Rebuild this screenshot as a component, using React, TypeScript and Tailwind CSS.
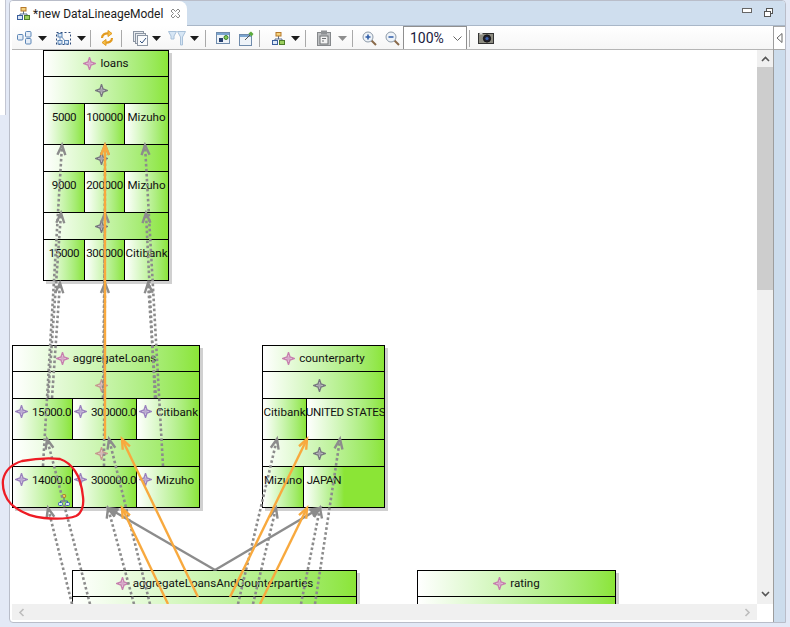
import React from 'react';

type Arrow = { x1: number; y1: number; x2: number; y2: number; kind: 'dot' | 'line' | 'orange' };

const GREEN = 'bg-linear-to-r from-white to-[#8be536]';

// everything in page coordinates, the head sits at x2,y2
const arrows: Arrow[] = [
  { x1: 43, y1: 466, x2: 62, y2: 145, kind: 'dot' },
  { x1: 48, y1: 398, x2: 61, y2: 213, kind: 'dot' },
  { x1: 52, y1: 398, x2: 60, y2: 283, kind: 'dot' },
  { x1: 104, y1: 466, x2: 105, y2: 145, kind: 'dot' },
  { x1: 103, y1: 398, x2: 105, y2: 213, kind: 'dot' },
  { x1: 104, y1: 398, x2: 105, y2: 283, kind: 'dot' },
  { x1: 163, y1: 466, x2: 145, y2: 145, kind: 'dot' },
  { x1: 155, y1: 398, x2: 146, y2: 213, kind: 'dot' },
  { x1: 156, y1: 398, x2: 148, y2: 283, kind: 'dot' },
  { x1: 90, y1: 604, x2: 47, y2: 439, kind: 'dot' },
  { x1: 72, y1: 604, x2: 48, y2: 508, kind: 'dot' },
  { x1: 134, y1: 604, x2: 108, y2: 508, kind: 'dot' },
  { x1: 150, y1: 604, x2: 109, y2: 439, kind: 'dot' },
  { x1: 238, y1: 604, x2: 277, y2: 439, kind: 'dot' },
  { x1: 253, y1: 604, x2: 276, y2: 508, kind: 'dot' },
  { x1: 301, y1: 604, x2: 320, y2: 508, kind: 'dot' },
  { x1: 315, y1: 604, x2: 340, y2: 439, kind: 'dot' },
  { x1: 215, y1: 570, x2: 108, y2: 508, kind: 'line' },
  { x1: 215, y1: 570, x2: 320, y2: 508, kind: 'line' },
  { x1: 105, y1: 439, x2: 105, y2: 145, kind: 'orange' },
  { x1: 198, y1: 597, x2: 122, y2: 439, kind: 'orange' },
  { x1: 168, y1: 604, x2: 122, y2: 508, kind: 'orange' },
  { x1: 230, y1: 597, x2: 307, y2: 439, kind: 'orange' },
  { x1: 260, y1: 604, x2: 307, y2: 508, kind: 'orange' },
];

function ArrowLine({ a }: { a: Arrow }) {
  const color = a.kind === 'orange' ? '#f8a93e' : '#8c8c8c';
  const dx = a.x2 - a.x1;
  const dy = a.y2 - a.y1;
  const len = Math.hypot(dx, dy);
  const ux = dx / len;
  const uy = dy / len;
  const back = 10;
  const side = 4;
  const lx = a.x2 - ux * back - uy * side;
  const ly = a.y2 - uy * back + ux * side;
  const rx = a.x2 - ux * back + uy * side;
  const ry = a.y2 - uy * back - ux * side;
  return (
    <g fill="none" stroke={color}>
      <line
        x1={a.x1}
        y1={a.y1}
        x2={a.x2}
        y2={a.y2}
        strokeWidth={a.kind === 'dot' ? 2.6 : 2.4}
        strokeDasharray={a.kind === 'dot' ? '2.6 2.4' : undefined}
      />
      <path
        d={`M${lx} ${ly}L${a.x2} ${a.y2}L${rx} ${ry}`}
        strokeWidth={2.4}
        fill={a.kind === 'line' ? color : 'none'}
      />
    </g>
  );
}

function Star({ color, size = 13 }: { color: string; size?: number }) {
  return (
    <svg width={size} height={size} viewBox="0 0 13 13" className="shrink-0">
      <path d="M6.5 .5L8 5L12.5 6.5L8 8L6.5 12.5L5 8L.5 6.5L5 5Z" fill="#eeeaf0" stroke={color} strokeWidth="1.4" />
      <path d="M6.5 4L9 6.5L6.5 9L4 6.5Z" fill={color} fillOpacity=".6" />
    </svg>
  );
}

function Cell({ text, star, tight, className }: { text: string; star?: boolean; tight?: boolean; className: string }) {
  // digits and capitals run narrower in the original font
  const tracking = /^[\d.]+$/.test(text) ? 'tracking-[-0.45px]' : /^[A-Z ]+$/.test(text) ? 'tracking-[-0.3px]' : '';
  const pad = tight ? 'pl-[1px]' : 'pl-[2px]';
  return (
    <div className={`${GREEN} ${className} flex ${star ? `justify-start ${pad} gap-[4px]` : 'justify-center'} pt-[5px] overflow-hidden whitespace-nowrap`}>
      {star && (
        <span className="pt-[1px]">
          <Star color="#9a82bd" />
        </span>
      )}
      <span className={tracking}>{text}</span>
    </div>
  );
}

function Row({ color }: { color: string }) {
  return (
    <div className={`${GREEN} h-[27px] border-b border-black flex items-center justify-center pr-[9px]`}>
      <Star color={color} />
    </div>
  );
}

function Header({ title }: { title: string }) {
  return (
    <div className={`${GREEN} h-[26px] border-b border-black flex items-center justify-center gap-[4px]`}>
      <Star color="#c77fae" />
      <span>{title}</span>
    </div>
  );
}

function LoansCells({ a, b, c }: { a: string; b: string; c: string }) {
  return (
    <div className="h-[41px] flex border-b border-black">
      <Cell text={a} className="w-[41px] border-r border-black" />
      <Cell text={b} className="w-[40px] border-r border-black" />
      <Cell text={c} className="flex-1" />
    </div>
  );
}

function AggCells({ a, b, c, children }: { a: string; b: string; c: string; children?: React.ReactNode }) {
  return (
    <div className="h-[41px] flex border-b border-black relative">
      <Cell star text={a} className="w-[60px] border-r border-black" />
      <Cell star tight text={b} className="w-[64px] border-r border-black" />
      <Cell star text={c} className="flex-1" />
      {children}
    </div>
  );
}

function Arrowdown({ className, color = '#1c1c1c' }: { className: string; color?: string }) {
  return (
    <div className={`${className} w-[9px] shrink-0`}>
      <svg width="9" height="5" viewBox="0 0 9 5" className="block">
        <path d="M0 0H9L4.5 5Z" fill={color} />
      </svg>
    </div>
  );
}

function Sep({ className }: { className: string }) {
  return <div className={`${className} w-px h-[17px] bg-[#a9a9a9] shrink-0`} />;
}

function Hierarchy() {
  return (
    <svg width="13" height="13" viewBox="0 0 13 13" className="shrink-0">
      <path d="M6.5 4V7M3 9V7H10V9" fill="none" stroke="#5a6f8f" />
      <rect x="4" y=".5" width="5" height="3.5" fill="#f6d27c" stroke="#b5792b" />
      <rect x=".5" y="8.5" width="5" height="4" fill="#dbe7f6" stroke="#3a5f9d" />
      <rect x="7.5" y="8.5" width="5" height="4" fill="#9bcf5e" stroke="#4d7d2a" />
    </svg>
  );
}

function Magnifier({ plus, className }: { plus?: boolean; className: string }) {
  return (
    <svg width="15" height="15" viewBox="0 0 15 15" className={`${className} shrink-0`}>
      <path d="M9.5 9.5L14 14" stroke="#8a6a4a" strokeWidth="2" />
      <circle cx="6" cy="6" r="5" fill="#eef3f8" stroke="#8d9aa8" />
      <path d="M3.5 6H8.5" stroke="#2f5da8" strokeWidth="1.6" />
      {plus && <path d="M6 3.5V8.5" stroke="#2f5da8" strokeWidth="1.6" />}
    </svg>
  );
}

function Toolbar() {
  return (
    <div className="h-[24px] flex items-center border-b border-[#b5b5b5] bg-linear-to-b from-white to-[#f6f6f6] ml-[2px] pt-[1px]">
      <svg width="15" height="14" viewBox="0 0 15 14" fill="#e6eef8" stroke="#5c86b6" className="ml-[5px] shrink-0">
        <rect x=".5" y="3.5" width="5.5" height="5.5" rx="1" />
        <rect x="8.5" y=".5" width="5.5" height="5.5" rx="1" />
        <rect x="8.5" y="7.5" width="5.5" height="5.5" rx="1" />
      </svg>
      <Arrowdown className="ml-[6px]" />
      <svg width="17" height="15" viewBox="0 0 17 15" fill="none" className="ml-[8px] shrink-0">
        <rect x="1.5" y="1.5" width="14" height="12" stroke="#2e4a78" strokeDasharray="2 2" />
        <path d="M5 4L11 11M5 4L5 10" stroke="#6d8fb8" />
        <rect x="3" y="2.5" width="4" height="3.5" fill="#dbe7f6" stroke="#5c86b6" />
        <rect x="3" y="9.5" width="4" height="3.5" fill="#dbe7f6" stroke="#5c86b6" />
        <rect x="9.5" y="9.5" width="4" height="3.5" fill="#dbe7f6" stroke="#5c86b6" />
      </svg>
      <Arrowdown className="ml-[5px]" />
      <Sep className="ml-[4px]" />
      <svg width="16" height="16" viewBox="0 0 16 16" fill="none" stroke="#e29a1f" strokeWidth="2.2" className="ml-[8px] shrink-0">
        <path d="M3 8C3 4.5 6 3 10 3.5" />
        <path d="M13 8C13 11.5 10 13 6 12.5" />
        <path d="M9 .5L13 3.5L9 6.5Z" fill="#f5c04a" strokeWidth="1" />
        <path d="M7 9.5L3 12.5L7 15.5Z" fill="#f5c04a" strokeWidth="1" />
      </svg>
      <Sep className="ml-[6px]" />
      <svg width="16" height="15" viewBox="0 0 16 15" fill="#e8ebef" stroke="#8c96a3" className="ml-[11px] shrink-0">
        <rect x=".5" y=".5" width="10" height="10" />
        <rect x="2.5" y="2.5" width="10" height="10" />
        <rect x="4.5" y="4.5" width="10" height="10" fill="#fafbfc" />
        <path d="M7 10L9 12L13 7" fill="none" stroke="#33517d" />
      </svg>
      <Arrowdown className="ml-[3px]" />
      <svg width="18" height="15" viewBox="0 0 18 15" fill="#d6e6f5" stroke="#a9c1d9" className="ml-[7px] shrink-0">
        <path d="M.5 .5H8.5L6 5V8H3V5Z" />
        <path d="M9.5 .5H17.5L14.5 6V14H12.5V6Z" />
      </svg>
      <Arrowdown className="ml-[4px]" />
      <Sep className="ml-[6px]" />
      <svg width="14" height="12" viewBox="0 0 14 12" className="ml-[10px] shrink-0">
        <rect x=".5" y=".5" width="13" height="11" fill="#eef3f8" stroke="#6f8bab" />
        <rect x="1" y="1" width="12" height="2" fill="#7ba4cf" />
        <rect x="3" y="6" width="4" height="4" fill="#26406e" />
        <circle cx="10" cy="5.5" r="2" fill="#7ecb55" stroke="#3d7f2d" />
      </svg>
      <svg width="15" height="15" viewBox="0 0 15 15" className="ml-[9px] shrink-0">
        <rect x=".5" y="3.5" width="12" height="11" fill="#eef3f8" stroke="#6f8bab" />
        <rect x="1" y="4" width="11" height="2" fill="#7ba4cf" />
        <path d="M6 9L11 4" stroke="#555" />
        <path d="M9.5 2.5L12 .5L14.5 3L12.5 5.5Z" fill="#5cab3c" />
      </svg>
      <Sep className="ml-[5px]" />
      <div className="ml-[12px]">
        <Hierarchy />
      </div>
      <Arrowdown className="ml-[6px]" />
      <Sep className="ml-[5px]" />
      <svg width="14" height="16" viewBox="0 0 14 16" className="ml-[11px] shrink-0">
        <rect x=".5" y="2.5" width="13" height="13" fill="#bfc1c3" stroke="#85888b" />
        <rect x="4" y=".5" width="6" height="4" fill="#8f9295" />
        <rect x="3" y="6" width="8" height="8" fill="#f2f2f2" stroke="#6f7275" />
        <path d="M5 8.5H9M5 11H7" stroke="#6f7275" />
      </svg>
      <Arrowdown className="ml-[7px]" color="#8d8d8d" />
      <Sep className="ml-[5px]" />
      <Magnifier plus className="ml-[9px]" />
      <Magnifier className="ml-[8px]" />
      <div className="ml-[3px] w-[64px] h-[23px] self-end shrink-0 border-x border-t border-[#8f8f8f] bg-white flex items-center pl-[6px] pr-[4px] justify-between text-[14px] text-[#1a1a40]">
        <span>100%</span>
        <svg width="9" height="5" viewBox="0 0 9 5" fill="none" stroke="#666">
          <path d="M.5 .5L4.5 4.5L8.5 .5" />
        </svg>
      </div>
      <Sep className="ml-[2px]" />
      <svg width="16" height="12" viewBox="0 0 16 12" className="ml-[8px] shrink-0">
        <rect x=".5" y="1.5" width="15" height="10" fill="#8e8d82" stroke="#333" />
        <circle cx="9" cy="6.5" r="3.6" fill="#202030" stroke="#111" />
        <circle cx="9" cy="6.5" r="1.6" fill="#3d64b0" />
        <rect x="1.5" y=".5" width="3" height="2" fill="#ddd" />
      </svg>
    </div>
  );
}

function Canvas() {
  return (
    <div className="relative w-[747px] h-[554px] bg-white overflow-hidden text-[11.6px] text-[#111]">
      <div className="absolute left-[33px] top-0 w-[126px] border-x border-t border-black shadow-[3px_3px_0_#d0d0d0]">
        <Header title="loans" />
        <Row color="#77777f" />
        <LoansCells a="5000" b="100000" c="Mizuho" />
        <Row color="#77777f" />
        <LoansCells a="9000" b="200000" c="Mizuho" />
        <Row color="#77777f" />
        <LoansCells a="15000" b="300000" c="Citibank" />
      </div>

      <div className="absolute left-[2px] top-[295px] w-[188px] border-x border-t border-black shadow-[3px_3px_0_#d0d0d0]">
        <Header title="aggregateLoans" />
        <Row color="#c69a8f" />
        <AggCells a="15000.0" b="300000.0" c="Citibank" />
        <Row color="#c69a8f" />
        <AggCells a="14000.0" b="300000.0" c="Mizuho">
          <div className="absolute left-[45px] top-[27px]">
            <svg width="12" height="12" viewBox="0 0 12 12">
              <path d="M6 4V7M2.5 9V7H9.5V9" fill="none" stroke="#3c5fb0" />
              <circle cx="6" cy="2" r="1.8" fill="#f3cf55" stroke="#a9812a" />
              <rect x=".5" y="8.5" width="4" height="3" rx="1" fill="#dbe7f6" stroke="#3c5fb0" />
              <rect x="7.5" y="8.5" width="4" height="3" rx="1" fill="#dbe7f6" stroke="#3c5fb0" />
            </svg>
          </div>
        </AggCells>
      </div>

      <div className="absolute left-[252px] top-[295px] w-[123px] border-x border-t border-black shadow-[3px_3px_0_#d0d0d0]">
        <Header title="counterparty" />
        <Row color="#77777f" />
        <div className="h-[41px] flex border-b border-black">
          <Cell text="Citibank" className="w-[44px] border-r border-black" />
          <Cell text="UNITED STATES" className="flex-1" />
        </div>
        <Row color="#77777f" />
        <div className="h-[41px] flex border-b border-black">
          <Cell text="Mizuno" className="w-[41px] border-r border-black" />
          <Cell text="JAPAN" className="w-[40px]" />
          <div className="flex-1 bg-[#8be536]" />
        </div>
      </div>

      <div className="absolute left-[62px] top-[520px] w-[285px] border-x border-t border-black shadow-[3px_3px_0_#d0d0d0]">
        <Header title="aggregateLoansAndCounterparties" />
        <Row color="#77777f" />
      </div>

      <div className="absolute left-[407px] top-[520px] w-[199px] border-x border-t border-black shadow-[3px_3px_0_#d0d0d0]">
        <Header title="rating" />
        <Row color="#77777f" />
      </div>

      <svg className="absolute inset-0" width="747" height="554" viewBox="10 50 747 554">
        {arrows.map((a, i) => (
          <ArrowLine key={i} a={a} />
        ))}
      </svg>
    </div>
  );
}

export default function App() {
  return (
    <div className="relative w-[790px] h-[627px] bg-[#e3e9f6] flex overflow-hidden font-['Roboto',sans-serif] text-[12px]">
      <div className="w-[9px] shrink-0">
        <div className="w-[6px] h-[115px] bg-white border-r border-[#c3c6d2]" />
      </div>

      <div className="w-[777px] h-[623px] flex flex-col border border-[#b9bdc9] rounded-t-[4px] rounded-bl-[4px] bg-white overflow-hidden">
        <div className="h-[25px] shrink-0 flex bg-[#cfdeee] border-b border-[#a9b7c8] relative">
          <div className="w-[177px] h-[25px] bg-white rounded-tr-[8px] flex items-center pl-[7px]">
            <Hierarchy />
            <span className="ml-[3px] text-[#1c1c1c] whitespace-nowrap">*new DataLineageModel</span>
            <svg width="11" height="11" viewBox="0 0 11 11" className="ml-auto mr-[6px]">
              <path d="M1 3L3 1L5.5 3.5L8 1L10 3L7.5 5.5L10 8L8 10L5.5 7.5L3 10L1 8L3.5 5.5Z" fill="#fff" stroke="#8a8a8a" />
            </svg>
          </div>
          <div className="ml-auto flex items-start gap-[12px] pt-[7px] pr-[12px]">
            <div className="w-[10px] h-[5px] border border-[#666] bg-white" />
            <svg width="9" height="9" viewBox="0 0 9 9" fill="#fff" stroke="#555">
              <rect x="2.5" y=".5" width="6" height="5" />
              <rect x=".5" y="3.5" width="6" height="5" />
            </svg>
          </div>
        </div>

        <div className="flex flex-1">
          <div className="w-[764px] flex flex-col border-r border-[#9d9d9d]">
            <Toolbar />
            <div className="flex">
              <Canvas />
              <div className="w-[16px] h-[554px] bg-[#f0f0f0] flex flex-col items-center">
                <svg width="9" height="17" viewBox="0 0 9 17" fill="none" stroke="#555" strokeWidth="1.6">
                  <path d="M1 11L4.5 7.5L8 11" />
                </svg>
                <div className="w-full h-[223px] bg-[#cdcdcd]" />
                <svg width="9" height="9" viewBox="0 0 9 9" fill="none" stroke="#555" strokeWidth="1.6" className="mt-auto mb-[6px]">
                  <path d="M1 3L4.5 6.5L8 3" />
                </svg>
              </div>
            </div>
            <div className="ml-[2px] w-[745px] h-[16px] bg-[#f0f0f0] flex items-center justify-between px-[5px]">
              <svg width="9" height="9" viewBox="0 0 9 9" fill="none" stroke="#bdbdbd" strokeWidth="1.6">
                <path d="M6.5 1L3 4.5L6.5 8" />
              </svg>
              <svg width="9" height="9" viewBox="0 0 9 9" fill="none" stroke="#bdbdbd" strokeWidth="1.6">
                <path d="M2.5 1L6 4.5L2.5 8" />
              </svg>
            </div>
          </div>
          <div className="flex-1 bg-[#ccdcec]">
            <div className="w-full h-[24px] bg-white border-y border-[#a8a8a8] flex items-center justify-center">
              <svg width="7" height="10" viewBox="0 0 7 10" fill="none" stroke="#666">
                <path d="M6 .5L1 5L6 9.5Z" />
              </svg>
            </div>
          </div>
        </div>
      </div>

      {/* red freehand ring around the 14000.0 cell */}
      <svg className="absolute inset-0 pointer-events-none" width="790" height="627" viewBox="0 0 790 627" fill="none">
        <path
          d="M60 459C50 458 33 459 22 461C12 464 5 470 3 480C2 490 6 499 11 504C20 512 32 517 44 518C54 519 68 519 76 516C82 513 84 505 83 497C82 487 80 478 75 471C71 465 66 461 60 459Z"
          stroke="#ee1c25"
          strokeWidth="2.3"
        />
      </svg>
    </div>
  );
}
